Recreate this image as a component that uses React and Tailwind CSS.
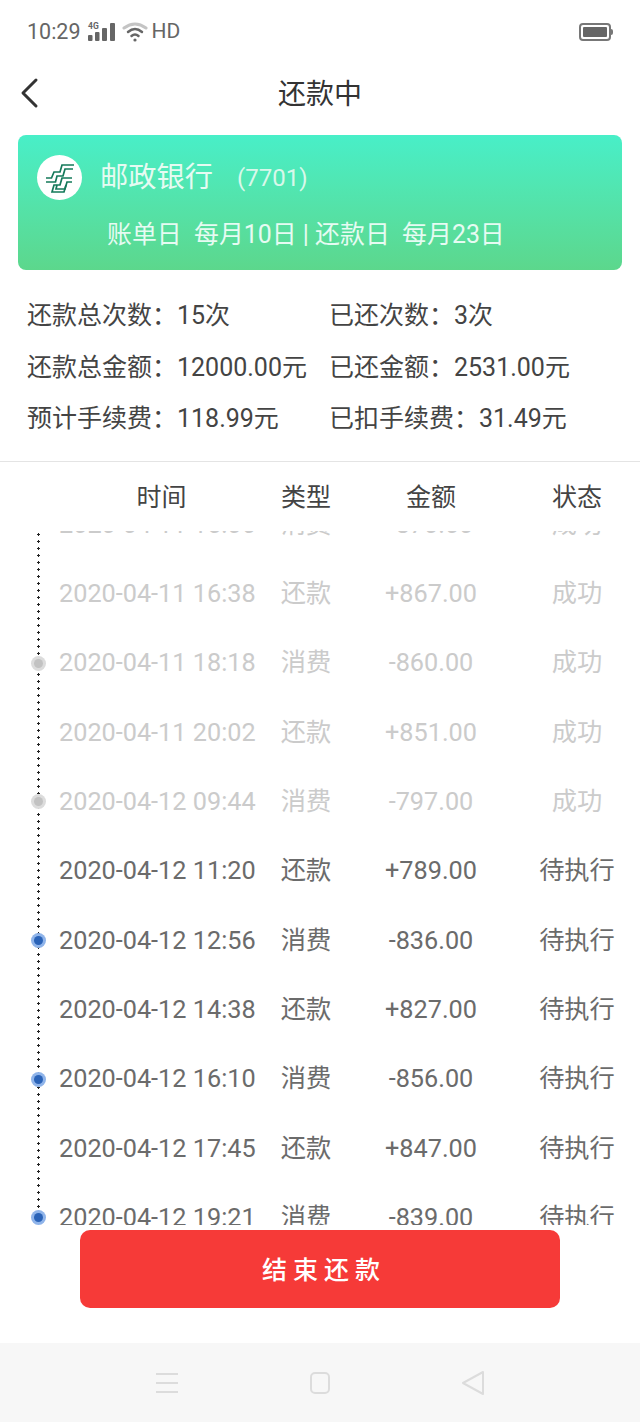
const CJK = "font-['Roboto','Noto_Sans_CJK_SC',sans-serif]"

const rows = [
  { time: '2020-04-11 15:06', type: '消费', amount: '-870.00', status: '成功', done: true },
  { time: '2020-04-11 16:38', type: '还款', amount: '+867.00', status: '成功', done: true },
  { time: '2020-04-11 18:18', type: '消费', amount: '-860.00', status: '成功', done: true, dot: true },
  { time: '2020-04-11 20:02', type: '还款', amount: '+851.00', status: '成功', done: true },
  { time: '2020-04-12 09:44', type: '消费', amount: '-797.00', status: '成功', done: true, dot: true },
  { time: '2020-04-12 11:20', type: '还款', amount: '+789.00', status: '待执行' },
  { time: '2020-04-12 12:56', type: '消费', amount: '-836.00', status: '待执行', dot: true },
  { time: '2020-04-12 14:38', type: '还款', amount: '+827.00', status: '待执行' },
  { time: '2020-04-12 16:10', type: '消费', amount: '-856.00', status: '待执行', dot: true },
  { time: '2020-04-12 17:45', type: '还款', amount: '+847.00', status: '待执行' },
  { time: '2020-04-12 19:21', type: '消费', amount: '-839.00', status: '待执行', dot: true },
]

const stats = [
  ['还款总次数：15次', '已还次数：3次'],
  ['还款总金额：12000.00元', '已还金额：2531.00元'],
  ['预计手续费：118.99元', '已扣手续费：31.49元'],
]

function StatusBar() {
  return (
    <div className="flex h-[64px] items-center justify-between pl-[27px] pr-[27px] text-[#666]">
      <div className="flex items-center">
        <span className="text-[21.5px]">10:29</span>
        <svg width="30" height="20" viewBox="0 0 30 20" className="ml-[6px]" fill="#666">
          <text x="1" y="7" fontSize="8.5" fontWeight="700" fontFamily="Roboto, sans-serif">4G</text>
          <rect x="1" y="13" width="4.5" height="6" rx="1" />
          <rect x="8" y="10" width="4.5" height="9" rx="1" />
          <rect x="15" y="6" width="5" height="13" rx="1" />
          <rect x="23" y="1" width="5" height="18" rx="1" />
        </svg>
        <svg width="26" height="20" viewBox="0 0 26 20" className="ml-[5px]" fill="none" strokeLinecap="round">
          <path d="M2 6 Q13 -2 24 6" stroke="#c4c4c4" strokeWidth="3" />
          <path d="M6 10 Q13 4 20 10" stroke="#666" strokeWidth="2.5" />
          <path d="M9.5 14 Q13 11 16.5 14" stroke="#666" strokeWidth="2.5" />
          <circle cx="13" cy="18" r="1.6" fill="#666" />
        </svg>
        <span className="ml-[4px] text-[21px]">HD</span>
      </div>
      <div className="flex items-center">
        <div className="flex h-[18px] w-[32px] items-center rounded-[4px] border-2 border-[#777] p-[2px]">
          <div className="h-full w-full rounded-[1px] bg-[#666]" />
        </div>
        <div className="h-[6px] w-[2px] rounded-r bg-[#777]" />
      </div>
    </div>
  )
}

function BankLogo() {
  return (
    <div className="flex h-[45px] w-[45px] items-center justify-center rounded-full bg-white">
      <svg width="30" height="30" viewBox="0 0 30 30" fill="none" stroke="#14795a" strokeWidth="1.7">
        <path d="M29 2 H17 L15 9 H9 L6.5 15 H1" />
        <path d="M28 6 H20 L18 13 H12 L10.5 19 H1" />
        <path d="M27 15 H17 L15 22 H9 L7 29 H19 L21 22" />
        <path d="M27 19 H22 L20 26 H11 L12 22" />
      </svg>
    </div>
  )
}

function Row({ row }) {
  return (
    <div className={`relative grid h-[69.33px] grid-cols-[205px_84px_166px_126px] items-center pl-[59px] text-center text-[25.25px] ${row.done ? 'text-[#cbcbcb]' : 'text-[#6b6b6b]'}`}>
      {row.dot && (
        <div className={`absolute left-[31px] top-[27px] flex h-[15px] w-[15px] items-center justify-center rounded-full ${row.done ? 'bg-[#dcdcdc]' : 'bg-[#8fb4ea]'}`}>
          <div className={`h-[9px] w-[9px] rounded-full ${row.done ? 'bg-[#c2c2c2]' : 'bg-[#2a63b8]'}`} />
        </div>
      )}
      <span className="whitespace-nowrap text-left">{row.time}</span>
      <span>{row.type}</span>
      <span>{row.amount}</span>
      <span>{row.status}</span>
    </div>
  )
}

export default function App() {
  return (
    <div className={`flex h-[1422px] w-[640px] flex-col overflow-hidden bg-white ${CJK}`}>
      <StatusBar />

      <div className="relative flex h-[57px] items-center justify-center pt-[4px]">
        <svg width="24" height="32" viewBox="0 0 24 32" className="absolute left-[19px] top-[13px]" fill="none" stroke="#333" strokeWidth="3" strokeLinecap="round" strokeLinejoin="round">
          <path d="M17 3 L4 16 L17 29" />
        </svg>
        <span className="text-[28px] text-[#333]">还款中</span>
      </div>

      <div className="mx-[18px] mt-[14px] h-[135px] rounded-[8px] bg-gradient-to-b from-[#48efc8] to-[#5cd78c] text-white">
        <div className="flex items-center pl-[19px] pt-[19px]">
          <BankLogo />
          <span className="ml-[18px] text-[28.25px] leading-[45px] text-[#e6fbf2]">邮政银行</span>
          <span className="ml-[24px] pt-[2px] text-[24px] leading-[45px] text-[#d8f8ea]">(7701)</span>
        </div>
        <div className="mt-[16px] whitespace-nowrap pl-[89px] text-[24.9px] leading-[36px] text-[#e6fbf2]">
          账单日&nbsp;&nbsp;每月10日 | 还款日&nbsp;&nbsp;每月23日
        </div>
      </div>

      <div className="mt-[28px] flex flex-col gap-[15.5px] pl-[27px] text-[25px] leading-[36px] text-[#444]">
        {stats.map(([left, right]) => (
          <div key={left} className="grid grid-cols-[302px_1fr] whitespace-nowrap">
            <span>{left}</span>
            <span>{right}</span>
          </div>
        ))}
      </div>

      <div className="mt-[24px] h-px bg-[#e4e4e4]" />

      <div className="grid h-[69px] grid-cols-[205px_84px_166px_126px] items-center pl-[59px] pt-[2px] text-center text-[25px] text-[#444]">
        <span>时间</span>
        <span>类型</span>
        <span>金额</span>
        <span>状态</span>
      </div>

      <div className="relative h-[694px] overflow-hidden">
        <div className="absolute bottom-[8px] left-[37px] top-0 w-[3px] bg-[radial-gradient(circle,#222_1px,transparent_1.3px)] bg-[length:3px_7px]" />
        <div className="-mt-[41px]">
          {rows.map(row => <Row key={row.time} row={row} />)}
        </div>
      </div>

      <button className="mx-auto mt-[5px] flex h-[78px] w-[480px] shrink-0 items-center justify-center rounded-[10px] bg-[#f63a38] pl-[8px] pt-[4px] text-[25px] font-medium tracking-[6px] text-white">
        结束还款
      </button>

      <div className="mt-[35px] flex h-[79px] items-center bg-[#f7f7f7]">
        <div className="flex w-full items-center justify-center gap-[130px]">
          <svg width="24" height="24" viewBox="0 0 24 24" fill="none" stroke="#dcdcdc" strokeWidth="2"><path d="M1 3 H23 M1 12 H23 M1 21 H23" /></svg>
          <svg width="22" height="24" viewBox="0 0 22 24" fill="none" stroke="#dcdcdc" strokeWidth="2"><rect x="2" y="2" width="18" height="20" rx="4" /></svg>
          <svg width="24" height="26" viewBox="0 0 24 26" fill="none" stroke="#dcdcdc" strokeWidth="2" strokeLinejoin="round"><path d="M22 2 L2 13 L22 24 Z" /></svg>
        </div>
      </div>
    </div>
  )
}
